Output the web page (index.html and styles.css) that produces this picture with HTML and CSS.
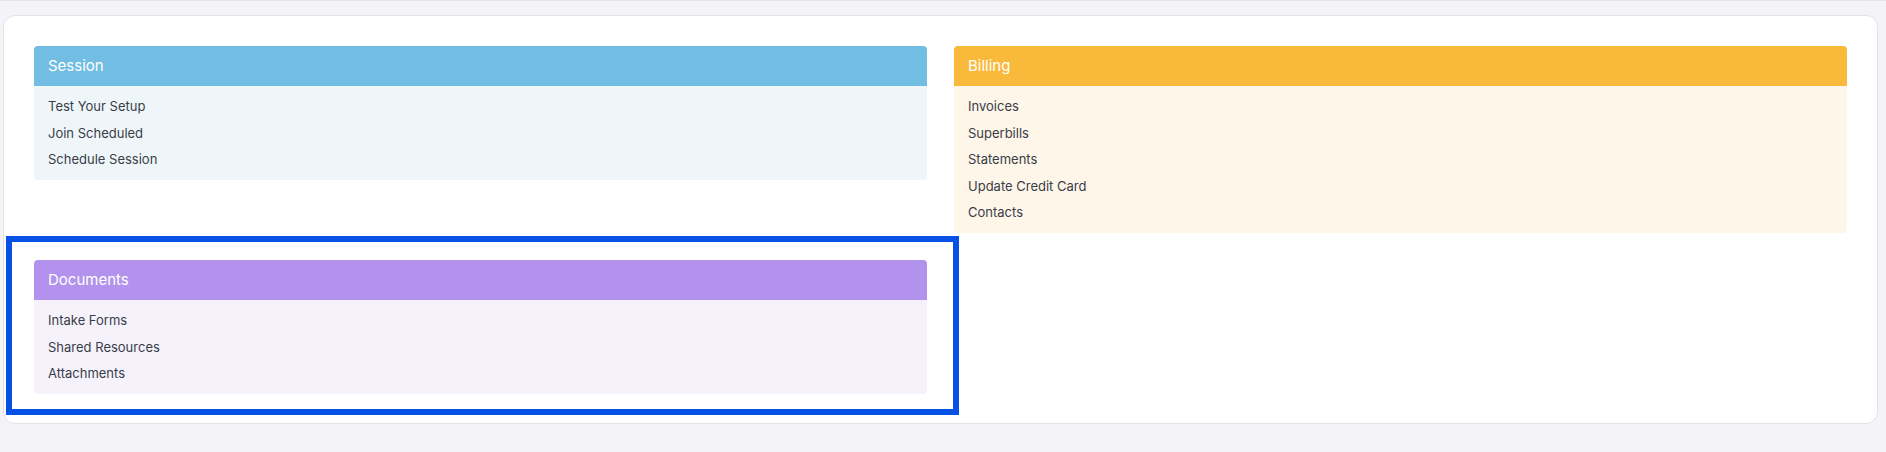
FILE: index.html
```html
<!DOCTYPE html>
<html>
<head>
<meta charset="utf-8">
<link rel="stylesheet" href="styles.css">
</head>
<body>
<div class="page">
  <div class="card">
    <div class="grid">
      <section class="panel session">
        <div class="panel-head">Session</div>
        <ul class="panel-body">
          <li>Test Your Setup</li>
          <li>Join Scheduled</li>
          <li>Schedule Session</li>
        </ul>
      </section>
      <section class="panel billing">
        <div class="panel-head">Billing</div>
        <ul class="panel-body">
          <li>Invoices</li>
          <li>Superbills</li>
          <li>Statements</li>
          <li>Update Credit Card</li>
          <li>Contacts</li>
        </ul>
      </section>
      <section class="panel documents">
        <div class="panel-head">Documents</div>
        <ul class="panel-body">
          <li>Intake Forms</li>
          <li>Shared Resources</li>
          <li>Attachments</li>
        </ul>
      </section>
    </div>
  </div>
  <div class="highlight"></div>
</div>
</body>
</html>
```
FILE: styles.css
```css
html, body {
  margin: 0;
  padding: 0;
  background: #f3f3f8;
  font-family: Inter, "Noto Sans", sans-serif;
}
.page {
  position: relative;
  border-top: 1px solid #e6e6ec;
  margin-top: 0;
  padding: 14px 8px 29px 3px;
  height: 452px;
  box-sizing: border-box;
}
.card {
  background: #ffffff;
  border: 1px solid #e2e2ea;
  border-radius: 12px;
  padding: 30px 30px 29px 30px;
}
.grid {
  display: grid;
  grid-template-columns: 1fr 1fr;
  column-gap: 27px;
  row-gap: 27px;
  align-items: start;
}
.panel {
  border-radius: 4px;
  overflow: hidden;
}
.panel-head {
  height: 40px;
  line-height: 40px;
  padding: 0 14px;
  color: #ffffff;
  font-size: 15px;
}
.panel-body {
  list-style: none;
  margin: 0;
  padding: 7px 14px 7.5px;
}
.panel-body li {
  height: 26.5px;
  line-height: 26.5px;
  font-size: 13px;
  color: #3a3d47;
}
.session .panel-head { background: #72bde3; }
.session .panel-body { background: #eff6fa; }
.billing .panel-head { background: #f9ba3c; }
.billing .panel-body { background: #fef6e9; }
.documents .panel-head { background: #b392ee; }
.documents .panel-body { background: #f5f2fc; }
.highlight {
  position: absolute;
  left: 6px;
  top: 235px;
  width: 953px;
  height: 179px;
  box-sizing: border-box;
  border: 6px solid #0650e6;
  pointer-events: none;
}
```
